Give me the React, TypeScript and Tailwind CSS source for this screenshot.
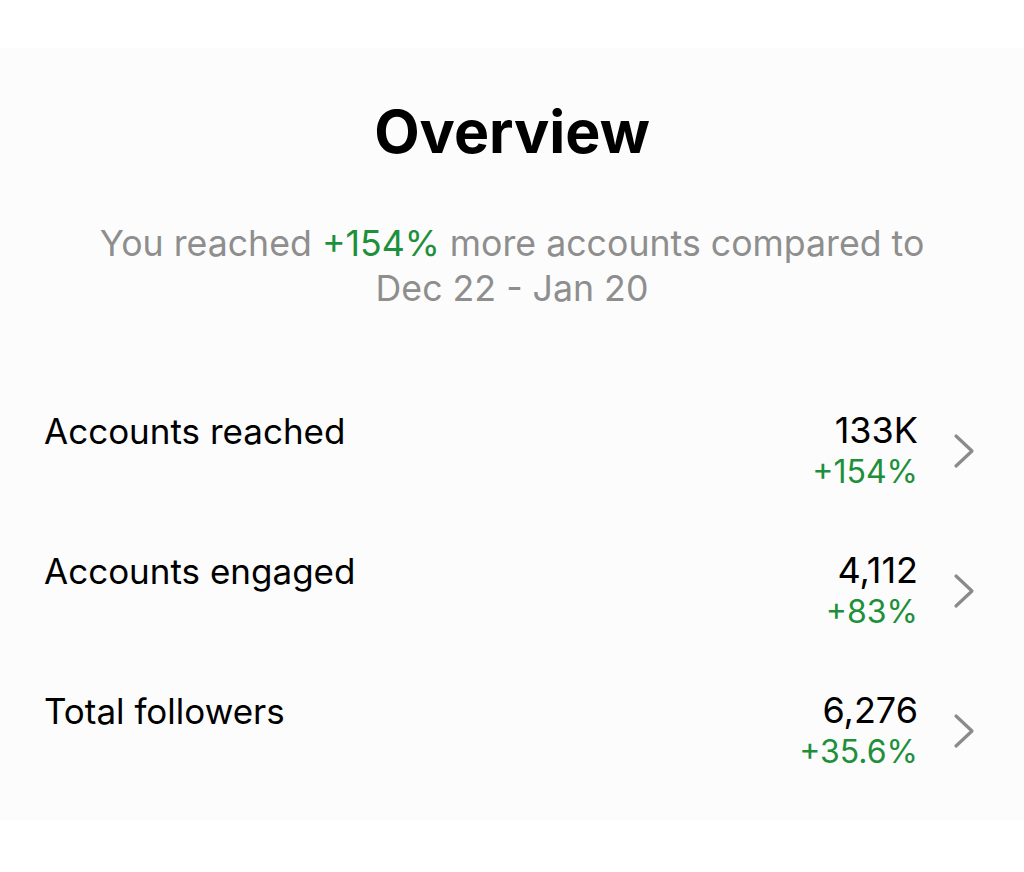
import React from 'react'

type Metric = {
  label: string
  value: string
  change: string
}

const metrics: Metric[] = [
  { label: 'Accounts reached', value: '133K', change: '+154%' },
  { label: 'Accounts engaged', value: '4,112', change: '+83%' },
  { label: 'Total followers', value: '6,276', change: '+35.6%' },
]

const Chevron: React.FC = () => (
  <svg width="22" height="36" viewBox="0 0 22 36" fill="none" className="shrink-0">
    <path d="M3 3L19 18L3 33" stroke="#8a8a8a" strokeWidth="3.2" strokeLinecap="round" strokeLinejoin="round" />
  </svg>
)

const App: React.FC = () => {
  return (
    <div className="min-h-[872px] bg-white pt-[48px] font-['Inter','Liberation_Sans',sans-serif]">
      <div className="flex h-[772px] flex-col bg-[#fcfcfc]">
        <h1 className="mt-[47px] text-center text-[59px] font-bold leading-[74px] text-black">Overview</h1>

        <p className="mt-[52px] text-center text-[35.7px] leading-[45px] text-[#8e8e8e]">
          You reached <span className="text-[#1e8f3a]">+154%</span> more accounts compared to
          <br />
          Dec 22 - Jan 20
        </p>

        <div className="mt-[99px] flex flex-col gap-[58px] pl-[44px] pr-[49px]">
          {metrics.map(m => (
            <div key={m.label} className="flex items-start justify-between">
              <span className="text-[35px] leading-[42px] text-black">{m.label}</span>
              <div className="flex items-center gap-[35px]">
                <div className="flex flex-col items-end">
                  <span className="text-[36px] leading-[41px] text-black">{m.value}</span>
                  <span className="text-[32px] leading-[41px] text-[#1e8f3a]">{m.change}</span>
                </div>
                <Chevron />
              </div>
            </div>
          ))}
        </div>
      </div>
    </div>
  )
}

export default App
